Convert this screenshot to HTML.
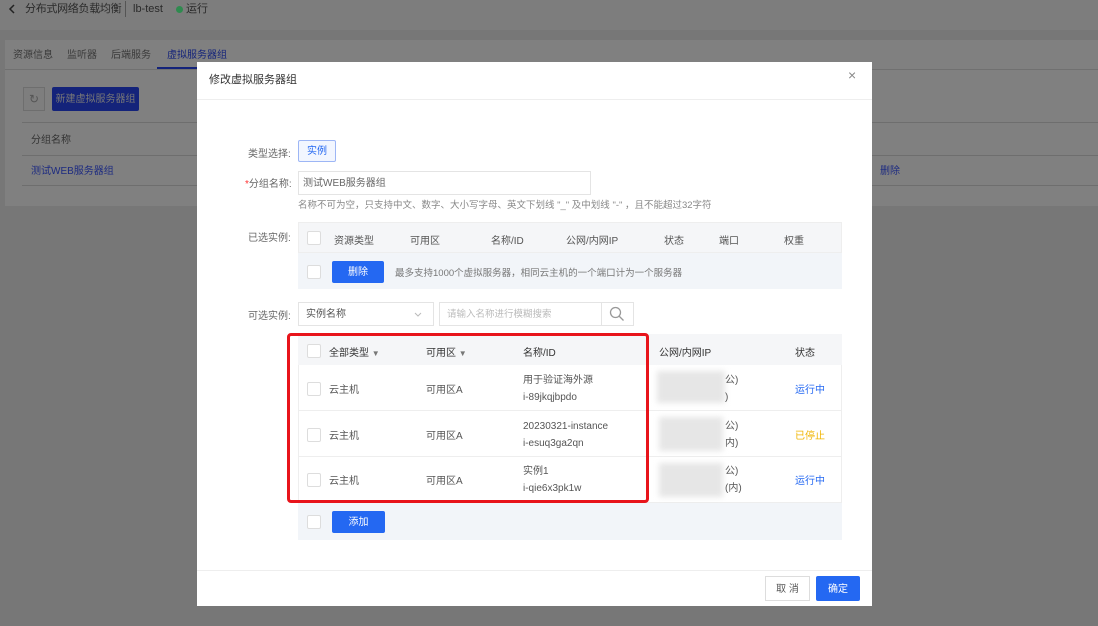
<!DOCTYPE html>
<html><head><meta charset="utf-8"><style>
*{margin:0;padding:0;box-sizing:border-box}
body{width:1098px;height:626px;overflow:hidden;background:#777;font-family:"Liberation Sans","Noto Sans CJK SC",sans-serif;font-size:12px;color:#333;position:relative}
.a{position:absolute;white-space:nowrap}
.cb{position:absolute;width:14px;height:14px;border:1px solid #ddd;border-radius:2px;background:#fff}
.btn{position:absolute;background:#2468f2;color:#fff;text-align:center;border-radius:2px;font-size:10px;padding-top:2px}
</style></head><body>
<div class="a" style="left:0;top:0;width:1098px;height:30px;background:#7d7d7d"></div>
<svg class="a" style="left:8px;top:4px" width="8" height="10" viewBox="0 0 8 10"><path d="M6 1L2 5l4 4" fill="none" stroke="#222" stroke-width="1.5"/></svg>
<div class="a" style="left:25px;top:0;line-height:18px;font-size:11px;color:#2a2a2a;letter-spacing:-0.3px">分布式网络负载均衡</div>
<div class="a" style="left:125px;top:1px;width:1px;height:16px;background:#555"></div>
<div class="a" style="left:133px;top:0;line-height:18px;font-size:11px;color:#2a2a2a">lb-test</div>
<div class="a" style="left:176px;top:6px;width:7px;height:7px;border-radius:50%;background:#2f8a4f"></div>
<div class="a" style="left:186px;top:0;line-height:18px;font-size:11px;color:#2a2a2a">运行</div>
<div class="a" style="left:5px;top:40px;width:1093px;height:166px;background:#808080"></div>
<div class="a" style="left:5px;top:69px;width:1093px;height:1px;background:#707070"></div>
<div class="a" style="left:13px;top:46px;font-size:10px;color:#3a3a3a">资源信息</div>
<div class="a" style="left:67px;top:46px;font-size:10px;color:#3a3a3a">监听器</div>
<div class="a" style="left:111px;top:46px;font-size:10px;color:#3a3a3a">后端服务</div>
<div class="a" style="left:167px;top:46px;font-size:10px;color:#14237a">虚拟服务器组</div>
<div class="a" style="left:157px;top:67px;width:40px;height:2px;background:#14237a"></div>
<div class="a" style="left:23px;top:87px;width:22px;height:24px;border:1px solid #6e6e6e;background:#7e7e7e;color:#555;text-align:center;line-height:22px">↻</div>
<div class="a" style="left:52px;top:87px;width:87px;height:24px;background:#14237a;color:#777;font-size:10px;text-align:center;line-height:26px;border-radius:2px">新建虚拟服务器组</div>
<div class="a" style="left:22px;top:122px;width:1076px;height:1px;background:#6e6e6e"></div>
<div class="a" style="left:31px;top:131px;font-size:10px;color:#333">分组名称</div>
<div class="a" style="left:22px;top:155px;width:1076px;height:1px;background:#6e6e6e"></div>
<div class="a" style="left:31px;top:162px;font-size:10px;color:#1c2a80">测试WEB服务器组</div>
<div class="a" style="left:880px;top:162px;font-size:10px;color:#1c2a80">删除</div>
<div class="a" style="left:22px;top:185px;width:1076px;height:1px;background:#6e6e6e"></div>
<div class="a" style="left:197px;top:62px;width:675px;height:544px;background:#fff">
 <div class="a" style="left:12px;top:9px;font-size:11px;color:#333">修改虚拟服务器组</div>
 <div class="a" style="left:651px;top:5px;font-size:14px;color:#888">×</div>
 <div class="a" style="left:0;top:37px;width:675px;height:1px;background:#eee"></div>
 <div class="a" style="left:51px;top:83px;font-size:10px;color:#666">类型选择:</div>
 <div class="a" style="left:101px;top:78px;width:38px;height:22px;border:1px solid #9db6f5;background:#f2f6ff;color:#2468f2;font-size:10px;text-align:center;line-height:22px;border-radius:2px">实例</div>
 <div class="a" style="left:48px;top:113px;font-size:10px;color:#666"><span style="color:#f33">*</span>分组名称:</div>
 <div class="a" style="left:101px;top:109px;width:293px;height:24px;border:1px solid #e4e4e4;font-size:10px;color:#666;padding-left:4px;line-height:24px">测试WEB服务器组</div>
 <div class="a" style="left:101px;top:135px;font-size:9.5px;color:#888">名称不可为空，只支持中文、数字、大小写字母、英文下划线 "_" 及中划线 "-" ，且不能超过32字符</div>
 <div class="a" style="left:51px;top:167px;font-size:10px;color:#666">已选实例:</div>
 <div class="a" style="left:101px;top:160px;width:544px;height:31px;background:#f5f6f8;border:1px solid #eee"></div>
 <div class="cb" style="left:110px;top:169px"></div>
 <div class="a" style="left:137px;top:170px;font-size:10px;color:#555">资源类型</div>
 <div class="a" style="left:213px;top:170px;font-size:10px;color:#555">可用区</div>
 <div class="a" style="left:294px;top:170px;font-size:10px;color:#555">名称/ID</div>
 <div class="a" style="left:369px;top:170px;font-size:10px;color:#555">公网/内网IP</div>
 <div class="a" style="left:467px;top:170px;font-size:10px;color:#555">状态</div>
 <div class="a" style="left:522px;top:170px;font-size:10px;color:#555">端口</div>
 <div class="a" style="left:587px;top:170px;font-size:10px;color:#555">权重</div>
 <div class="a" style="left:101px;top:191px;width:544px;height:36px;background:#f2f5f9"></div>
 <div class="cb" style="left:110px;top:203px"></div>
 <div class="btn" style="left:135px;top:199px;width:52px;height:22px;line-height:20px">删除</div>
 <div class="a" style="left:198px;top:203px;font-size:9.5px;color:#777">最多支持1000个虚拟服务器，相同云主机的一个端口计为一个服务器</div>
 <div class="a" style="left:51px;top:245px;font-size:10px;color:#666">可选实例:</div>
 <div class="a" style="left:101px;top:240px;width:136px;height:24px;border:1px solid #e4e4e4;font-size:10px;color:#555;padding-left:7px;line-height:24px">实例名称</div>
 <svg class="a" style="left:217px;top:250px" width="8" height="5" viewBox="0 0 8 5"><path d="M1 1l3 3 3-3" fill="none" stroke="#bbb"/></svg>
 <div class="a" style="left:242px;top:240px;width:195px;height:24px;border:1px solid #e4e4e4;font-size:9.5px;color:#bbb;padding-left:7px;line-height:24px">请输入名称进行模糊搜索</div>
 <div class="a" style="left:404px;top:240px;width:1px;height:24px;background:#e4e4e4"></div>
 <svg class="a" style="left:412px;top:244px" width="16" height="16" viewBox="0 0 16 16"><circle cx="6.5" cy="6.5" r="5" fill="none" stroke="#999" stroke-width="1.3"/><path d="M10 10l4.5 4.5" stroke="#999" stroke-width="1.3"/></svg>
 <div class="a" style="left:101px;top:272px;width:544px;height:206px;border:1px solid #eee"></div>
 <div class="a" style="left:101px;top:272px;width:544px;height:31px;background:#f5f6f8"></div>
 <div class="cb" style="left:110px;top:282px"></div>
 <div class="a" style="left:132px;top:282px;font-size:10px;color:#333">全部类型 <span style="color:#777;font-size:8px">▼</span></div>
 <div class="a" style="left:229px;top:282px;font-size:10px;color:#333">可用区 <span style="color:#777;font-size:8px">▼</span></div>
 <div class="a" style="left:326px;top:282px;font-size:10px;color:#333">名称/ID</div>
 <div class="a" style="left:462px;top:282px;font-size:10px;color:#333">公网/内网IP</div>
 <div class="a" style="left:598px;top:282px;font-size:10px;color:#333">状态</div>
 <div class="a" style="left:101px;top:348px;width:544px;height:1px;background:#eee"></div>
 <div class="a" style="left:101px;top:394px;width:544px;height:1px;background:#eee"></div>
 <div class="a" style="left:101px;top:440px;width:544px;height:1px;background:#eee"></div>
 <div class="cb" style="left:110px;top:320px"></div>
 <div class="a" style="left:132px;top:319px;font-size:10px;color:#555">云主机</div>
 <div class="a" style="left:229px;top:319px;font-size:10px;color:#555">可用区A</div>
 <div class="a" style="left:326px;top:310px;font-size:10px;color:#555;line-height:17px">用于验证海外源<br>i-89jkqjbpdo</div>
 <div class="a" style="left:460px;top:309px;width:68px;height:32px;background:#e6e6e6;filter:blur(3px)"></div>
 <div class="a" style="left:528px;top:310px;font-size:10px;color:#555;line-height:17px">公)<br>)</div>
 <div class="a" style="left:598px;top:319px;font-size:10px;color:#2468f2">运行中</div>
 <div class="cb" style="left:110px;top:366px"></div>
 <div class="a" style="left:132px;top:365px;font-size:10px;color:#555">云主机</div>
 <div class="a" style="left:229px;top:365px;font-size:10px;color:#555">可用区A</div>
 <div class="a" style="left:326px;top:356px;font-size:10px;color:#555;line-height:17px">20230321-instance<br>i-esuq3ga2qn</div>
 <div class="a" style="left:462px;top:355px;width:64px;height:34px;background:#e6e6e6;filter:blur(3px)"></div>
 <div class="a" style="left:528px;top:356px;font-size:10px;color:#555;line-height:17px">公)<br>内)</div>
 <div class="a" style="left:598px;top:365px;font-size:10px;color:#f0b400">已停止</div>
 <div class="cb" style="left:110px;top:411px"></div>
 <div class="a" style="left:132px;top:410px;font-size:10px;color:#555">云主机</div>
 <div class="a" style="left:229px;top:410px;font-size:10px;color:#555">可用区A</div>
 <div class="a" style="left:326px;top:401px;font-size:10px;color:#555;line-height:17px">实例1<br>i-qie6x3pk1w</div>
 <div class="a" style="left:462px;top:401px;width:64px;height:34px;background:#e6e6e6;filter:blur(3px)"></div>
 <div class="a" style="left:528px;top:401px;font-size:10px;color:#555;line-height:17px">公)<br>(内)</div>
 <div class="a" style="left:598px;top:410px;font-size:10px;color:#2468f2">运行中</div>
 <div class="a" style="left:101px;top:441px;width:544px;height:37px;background:#f2f5f9"></div>
 <div class="cb" style="left:110px;top:453px"></div>
 <div class="btn" style="left:135px;top:449px;width:53px;height:22px;line-height:20px">添加</div>
 <div class="a" style="left:90px;top:271px;width:362px;height:170px;border:3px solid #e8141b;border-radius:4px"></div>
 <div class="a" style="left:0;top:508px;width:675px;height:1px;background:#eee"></div>
 <div class="a" style="left:568px;top:514px;width:45px;height:25px;border:1px solid #ddd;font-size:10px;color:#555;text-align:center;line-height:25px">取 消</div>
 <div class="btn" style="left:619px;top:514px;width:44px;height:25px;line-height:23px">确定</div>
</div>
</body></html>
